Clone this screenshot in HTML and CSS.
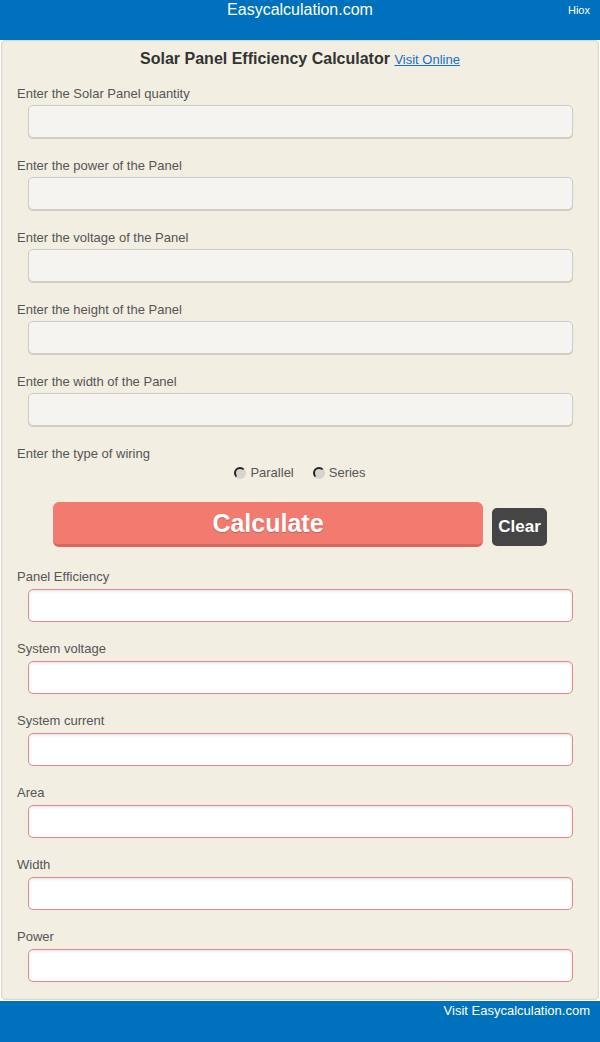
FILE: index.html
```html
<!DOCTYPE html>
<html lang="en">
<head>
    <meta charset="UTF-8">
    <meta name="viewport" content="width=device-width, initial-scale=1.0">
    <title>Solar Panel Efficiency Calculator</title>
    <link rel="stylesheet" href="styles.css">
</head>
<body>
    <!-- Top bar -->
    <header class="topbar">
        <span class="site-name">Easycalculation.com</span>
        <span class="hiox">Hiox</span>
    </header>

    <div class="calc-box">
        <h1 class="calc-title">Solar Panel Efficiency Calculator <a href="#">Visit Online</a></h1>

        <!-- Inputs -->
        <div class="field">
            <label>Enter the Solar Panel quantity</label>
            <input type="text" class="in-box">
        </div>
        <div class="field">
            <label>Enter the power of the Panel</label>
            <input type="text" class="in-box">
        </div>
        <div class="field">
            <label>Enter the voltage of the Panel</label>
            <input type="text" class="in-box">
        </div>
        <div class="field">
            <label>Enter the height of the Panel</label>
            <input type="text" class="in-box">
        </div>
        <div class="field">
            <label>Enter the width of the Panel</label>
            <input type="text" class="in-box">
        </div>
        <div class="field">
            <label>Enter the type of wiring</label>
            <div class="radios">
                <span class="radio"><i class="dot"></i>Parallel</span>
                <span class="radio"><i class="dot"></i>Series</span>
            </div>
        </div>

        <!-- Buttons -->
        <div class="actions">
            <button class="calc-btn">Calculate</button>
            <button class="clear-btn">Clear</button>
        </div>

        <!-- Results -->
        <div class="res">
            <label>Panel Efficiency</label>
            <input type="text" class="out-box">
        </div>
        <div class="res">
            <label>System voltage</label>
            <input type="text" class="out-box">
        </div>
        <div class="res">
            <label>System current</label>
            <input type="text" class="out-box">
        </div>
        <div class="res">
            <label>Area</label>
            <input type="text" class="out-box">
        </div>
        <div class="res">
            <label>Width</label>
            <input type="text" class="out-box">
        </div>
        <div class="res">
            <label>Power</label>
            <input type="text" class="out-box">
        </div>
    </div>

    <footer class="bottombar">
        <a href="#">Visit Easycalculation.com</a>
    </footer>
</body>
</html>
```

FILE: styles.css
```css
body {
    margin: 0;
    font-family: 'Liberation Sans', Arial, sans-serif;
    background: #ffffff;
    color: #555;
}

/* Header */
.topbar {
    background-color: #0071bc;
    height: 40px;
    position: relative;
    text-align: center;
}
.site-name {
    display: inline-block;
    color: #fff;
    font-size: 16px;
    line-height: 20px;
}
.hiox {
    position: absolute;
    right: 10px;
    top: 4px;
    color: #fff;
    font-size: 11px;
}

/* Calculator box */
.calc-box {
    margin: 0 1px;
    background-color: #f2eee2;
    border: 1px solid #dcd9cf;
    border-radius: 4px;
    padding: 0 15px 17px 15px;
    box-shadow: inset 0 0 2px rgba(0, 0, 0, 0.08);
}
.calc-title {
    margin: 0;
    padding-top: 8px;
    text-align: center;
    font-size: 16px;
    line-height: 20px;
    color: #333;
}
.calc-title a {
    font-size: 13px;
    font-weight: normal;
    color: #1a6fc4;
}

.field {
    margin-top: 16px;
}
.field + .field {
    margin-top: 20px;
}
.actions + .res {
    margin-top: 22px;
}
.res + .res {
    margin-top: 19px;
}
.field label, .res label {
    display: block;
    font-size: 13px;
    line-height: 16px;
    color: #555;
}
.in-box, .out-box {
    display: block;
    box-sizing: border-box;
    width: calc(100% - 21px);
    height: 33px;
    margin: 3px 10px 0 11px;
    border-radius: 5px;
    font-size: 14px;
    padding: 4px 8px;
}
.in-box {
    background: #f5f4f1;
    border: 1px solid #cfcdc7;
    box-shadow: 0 1px 1px rgba(0, 0, 0, 0.15);
}
.out-box {
    margin-top: 4px;
    background: #fff;
    border: 1px solid #dc8a90;
    box-shadow: inset 0 1px 3px rgba(0, 0, 0, 0.12);
}

/* Radio buttons */
.radios {
    display: flex;
    justify-content: center;
    gap: 19px;
    margin-top: 3px;
    font-size: 13px;
    line-height: 16px;
    color: #555;
}
.radio {
    display: flex;
    align-items: center;
}
.dot {
    display: inline-block;
    width: 8px;
    height: 8px;
    border-radius: 50%;
    background: #d6d4cf;
    border: 2px solid;
    border-color: #222 transparent transparent #222;
    margin-right: 4px;
}

/* Buttons */
.actions {
    display: flex;
    justify-content: center;
    align-items: flex-end;
    gap: 9px;
    margin-top: 21px;
}
.calc-btn {
    width: 430px;
    height: 45px;
    background: #f27a6f;
    border: none;
    border-bottom: 3px solid #d9675d;
    border-radius: 6px;
    color: #fff;
    font-family: 'Liberation Sans', Arial, sans-serif;
    font-weight: bold;
    font-size: 25px;
    text-shadow: 0 1px 1px rgba(0, 0, 0, 0.2);
    cursor: pointer;
}
.clear-btn {
    width: 55px;
    height: 38px;
    margin-bottom: 1px;
    background: #454545;
    border: none;
    border-radius: 5px;
    color: #fff;
    font-family: 'Liberation Sans', Arial, sans-serif;
    font-weight: bold;
    font-size: 17px;
    padding: 0;
    cursor: pointer;
}

/* Footer */
.bottombar {
    background-color: #0071bc;
    height: 41px;
    margin-top: 1px;
    text-align: right;
    padding-right: 10px;
}
.bottombar a {
    color: #fff;
    text-decoration: none;
    font-size: 13px;
    line-height: 20px;
}
```
